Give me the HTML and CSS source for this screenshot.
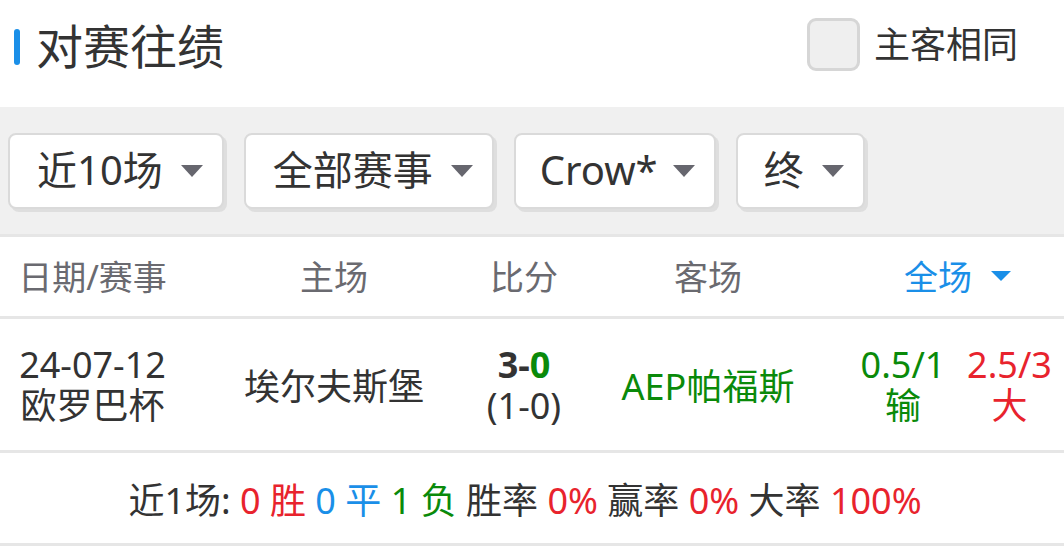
FILE: index.html
```html
<!DOCTYPE html>
<html lang="zh-CN">
<head>
<meta charset="utf-8">
<title>对赛往绩</title>
<link rel="stylesheet" href="styles.css">
</head>
<body>
<div class="page">
  <div class="title-row">
    <div class="title"><span class="bar"></span>对赛往绩</div>
    <div class="same"><span class="checkbox"></span>主客相同</div>
  </div>

  <div class="filters">
    <div class="btn b1"><span>近10场</span><span class="tri"></span></div>
    <div class="btn b2"><span>全部赛事</span><span class="tri"></span></div>
    <div class="btn b3"><span>Crow*</span><span class="tri"></span></div>
    <div class="btn b4"><span>终</span><span class="tri"></span></div>
  </div>

  <div class="grid thead">
    <div class="cell">日期/赛事</div>
    <div class="cell">主场</div>
    <div class="cell">比分</div>
    <div class="cell">客场</div>
    <div class="cell span2 blue">全场<span class="tri tri-blue"></span></div>
  </div>

  <div class="grid trow">
    <div class="cell stack"><span>24-07-12</span><span>欧罗巴杯</span></div>
    <div class="cell">埃尔夫斯堡</div>
    <div class="cell stack"><span class="score">3-<em class="green">0</em></span><span>(1-0)</span></div>
    <div class="cell green">AEP帕福斯</div>
    <div class="cell stack green"><span>0.5/1</span><span>输</span></div>
    <div class="cell stack red"><span>2.5/3</span><span>大</span></div>
  </div>

  <div class="summary"><p class="sum-text">近1场: <span class="red">0 胜</span> <span class="blue">0 平</span> <span class="green">1 负</span> 胜率 <span class="red">0%</span> 赢率 <span class="red">0%</span> 大率 <span class="red">100%</span></p></div>
</div>
</body>
</html>
```

FILE: styles.css
```css
* { box-sizing: border-box; }
html, body { margin: 0; padding: 0; background: #fff; }
body {
  font-family: "Noto Sans", "Noto Sans CJK SC", sans-serif;
  color: #333;
  width: 1064px;
  overflow: hidden;
}
.page { width: 1064px; }

.title-row {
  height: 107px;
  display: flex;
  align-items: center;
  justify-content: space-between;
  padding: 0 46px 0 14px;
}
.title {
  display: flex;
  align-items: center;
  font-size: 47px;
  line-height: 1;
  color: #333;
  margin-top: -14px;
}
.bar {
  width: 6px;
  height: 36px;
  border-radius: 3px;
  background: #1a8fe8;
  margin-right: 16px;
}
.same {
  display: flex;
  align-items: center;
  font-size: 36px;
  line-height: 1;
  color: #333;
  margin-top: -18px;
}
.checkbox {
  width: 53px;
  height: 53px;
  border: 3px solid #d6d6d6;
  border-radius: 9px;
  background: #efefef;
  margin-right: 14px;
}

.filters {
  height: 130px;
  background: #f0f0f0;
  border-bottom: 3px solid #e6e6e6;
  display: flex;
  align-items: center;
  gap: 20px;
  padding: 0 0 0 8px;
}
.btn {
  height: 76px;
  display: flex;
  align-items: center;
  gap: 18px;
  padding: 0 19px 0 27px;
  background: #fff;
  border: 2px solid #dadada;
  border-radius: 8px;
  box-shadow: 3px 3px 0 #dedede;
  font-size: 40px;
  color: #333;
  line-height: 1;
}
.btn span:first-child { margin-top: -2px; }
.b3 { padding-left: 24px; gap: 15px; }
.b4 { padding-left: 26px; }
.tri {
  width: 0;
  height: 0;
  border-left: 11px solid transparent;
  border-right: 11px solid transparent;
  border-top: 12px solid #66666e;
}
.tri-blue {
  border-left-width: 10px;
  border-right-width: 10px;
  border-top: 10px solid #1a8fe8;
  margin-left: 19px;
}

.grid {
  display: grid;
  grid-template-columns: 185px 298px 82px 286px 104px 1fr;
  border-bottom: 3px solid #e6e6e6;
}
.cell {
  display: flex;
  align-items: center;
  justify-content: center;
  text-align: center;
  white-space: nowrap;
}
.thead { height: 82px; font-size: 34px; color: #6a6a70; }
.thead .cell { padding-bottom: 2px; }
.span2 { grid-column: span 2; }
.trow { height: 134px; font-size: 36px; color: #333; }
.stack { flex-direction: column; line-height: 41px; }
.score { font-weight: bold; }
.score em { font-style: normal; }

.green { color: #0a8a0a; }
.red { color: #e8232d; }
.blue { color: #1a8fe8; }

.summary {
  height: 93px;
  border-bottom: 3px solid #e6e6e6;
  display: flex;
  align-items: center;
  justify-content: center;
  font-size: 36px;
  color: #333;
  padding-right: 14px;
}
.sum-text { margin: 0; white-space: nowrap; }
```
